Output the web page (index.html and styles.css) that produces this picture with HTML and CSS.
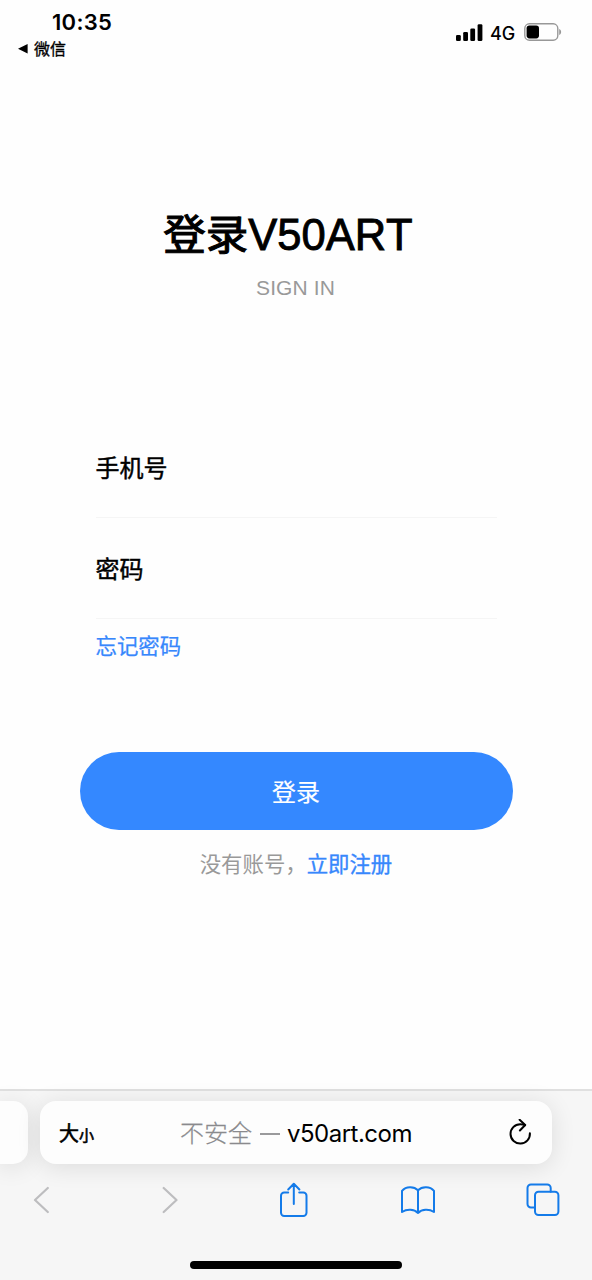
FILE: index.html
```html
<!DOCTYPE html>
<html lang="zh-CN">
<head>
<meta charset="utf-8">
<meta name="viewport" content="width=device-width">
<title>登录V50ART</title>
<link rel="stylesheet" href="styles.css">
</head>
<body>
<div class="screen">
  <header class="status">
    <div class="status-left">
      <div class="clock">10:35</div>
      <div class="back-app">
        <svg width="10" height="11" viewBox="0 0 10 11"><path d="M9.6 1.1V10.5L0 5.8Z"/></svg>
        <span>微信</span>
      </div>
    </div>
    <div class="status-right">
      <svg class="signal" width="27" height="18" viewBox="0 0 27 18">
        <rect x="0" y="11" width="4.8" height="6" rx="1.3"/>
        <rect x="7.2" y="8" width="4.8" height="9" rx="1.3"/>
        <rect x="14.3" y="4.5" width="4.8" height="12.5" rx="1.3"/>
        <rect x="21.6" y="0.2" width="4.8" height="16.8" rx="1.3"/>
      </svg>
      <span class="network">4G</span>
      <svg class="battery" width="38" height="18" viewBox="0 0 38 18">
        <rect x=".8" y=".8" width="33" height="16.4" rx="4.6" fill="none" stroke="#989898" stroke-width="1.4"/>
        <rect x="2.6" y="2.6" width="12.4" height="12.8" rx="2.8"/>
        <path d="M35.2 6C37.8 7 37.8 11 35.2 12Z" fill="#989898"/>
      </svg>
    </div>
  </header>

  <main class="login">
    <h1 class="title">登录<span class="title-latin">V50ART</span></h1>
    <p class="subtitle">SIGN IN</p>
    <form class="form">
      <div class="field">手机号</div>
      <div class="field">密码</div>
      <a class="forgot">忘记密码</a>
    </form>
    <button class="submit" type="button">登录</button>
    <p class="register">没有账号，<a class="register-link">立即注册</a></p>
  </main>

  <footer class="browser">
    <div class="tabs">
      <div class="tab-prev"></div>
      <div class="address">
        <span class="text-size">大<small class="text-small">小</small></span>
        <span class="url"><span class="insecure">不安全 <i class="dash"></i></span><span class="host">v50art.com</span></span>
        <svg class="reload" width="24" height="28" viewBox="0 0 24 28" fill="none" stroke="#000" stroke-width="2" stroke-linecap="round" stroke-linejoin="round">
          <path d="M21.9 14.2A9.7 9.7 0 1 1 12.2 5.2Q14.6 5.2 17 6.2"/>
          <path d="M11.6 .8L17.2 6L11.9 11.5"/>
        </svg>
      </div>
    </div>
    <nav class="toolbar">
      <svg class="chevron" width="16" height="28" viewBox="0 0 16 28"><path d="M14.8 2L2 14L14.8 26"/></svg>
      <svg class="chevron" width="16" height="28" viewBox="0 0 16 28"><path d="M1.7 2L14.5 14L1.7 26"/></svg>
      <svg class="tool" width="30" height="36" viewBox="0 0 30 36"><path d="M9.2 10.5H5.2A3.2 3.2 0 0 0 2 13.7V30.8A3.2 3.2 0 0 0 5.2 34H24.3A3.2 3.2 0 0 0 27.5 30.8V13.7A3.2 3.2 0 0 0 24.3 10.5H20.2M14.8 22V2M9.2 7.5L14.8 1.8L20.4 7.5"/></svg>
      <svg class="tool" width="36" height="36" viewBox="0 0 36 36"><path d="M18 31V8.3M18 31C14 27 7 26.7 2 30V8.8C6 4 14 4 18 8.3C22 4 30 4 34 8.8V30C29 26.7 22 27 18 31"/></svg>
      <svg class="tool" width="34" height="36" viewBox="0 0 34 36"><path d="M9 25.5H5A3.5 3.5 0 0 1 1.5 22V6A3.5 3.5 0 0 1 5 2.5H21.2A3.5 3.5 0 0 1 24.7 6V9.7"/><rect x="9" y="9.7" width="23.4" height="23.4" rx="3.5"/></svg>
    </nav>
    <div class="home"></div>
  </footer>
</div>
</body>
</html>
```
FILE: styles.css
```css
* { box-sizing: border-box; }
body { margin: 0; background: #fefefe; color: #000; font-family: "Liberation Sans", "Noto Sans CJK SC", sans-serif; }
svg { display: block; flex: none; }
.screen { width: 592px; height: 1280px; display: flex; flex-direction: column; overflow: hidden; }
.status { height: 70px; flex: none; display: flex; justify-content: space-between; }
.status-left { padding: 9px 0 0 18px; }
.clock { padding-left: 34px; font: 600 22px/26px Inter, sans-serif; letter-spacing: 0.3px; }
.back-app { display: flex; align-items: center; gap: 6px; margin-top: 2px; font: 400 16px/22px "Noto Sans CJK SC", sans-serif; -webkit-text-stroke: 0.3px #000; }
.status-right { display: flex; align-items: flex-start; padding: 24px 30px 0 0; }
.network { margin-left: 7px; width: 34px; font: 500 18px/19px Inter, sans-serif; }
.battery { margin-top: -1px; }

.login { flex: 1; display: flex; flex-direction: column; align-items: center; }
.title { margin: 134px 16px 0 0; font-size: 42.5px; line-height: 62px; font-weight: 400; font-kerning: none; white-space: nowrap; -webkit-text-stroke: 1.1px #000; }
.title-latin { font-size: 43.5px; -webkit-text-stroke: 0.9px #000; }
.subtitle { margin: 5px 1px 0 0; font-size: 21px; line-height: 32px; letter-spacing: 0.1px; color: #999; }
.form { width: 401px; margin-top: 114px; }
.field { height: 101px; padding-top: 34px; border-bottom: 1px solid #f5f5f5; font-size: 24px; line-height: 36px; -webkit-text-stroke: 0.45px #000; }
.field:first-child { height: 100px; padding-top: 33px; }
.forgot { display: block; margin-top: 12px; font-size: 21.4px; line-height: 32px; color: #3787fc; -webkit-text-stroke: 0.25px #3787fc; }
.submit { width: 433px; height: 78px; margin-top: 89px; padding: 0; border: 0; border-radius: 39px; background: #3488ff; color: #fff; font: 24px/36px "Noto Sans CJK SC", sans-serif; -webkit-text-stroke: 0.2px #fff; }
.register { margin: 19px 0 0; font-size: 21.4px; line-height: 32px; color: #999; }
.register-link { color: #3787fc; -webkit-text-stroke: 0.35px #3787fc; }

.browser { height: 191px; flex: none; border-top: 2px solid #e0e0e0; background: #f6f6f6; display: flex; flex-direction: column; align-items: center; }
.tabs { width: 100%; display: flex; gap: 12px; padding-top: 10px; }
.tab-prev { width: 28px; height: 63px; border-radius: 0 15px 15px 0; background: #fdfdfd; box-shadow: 0 3px 24px rgba(0,0,0,.11); }
.address { width: 512px; height: 63px; border-radius: 16px; background: #fdfdfd; box-shadow: 0 3px 24px rgba(0,0,0,.11); display: grid; grid-template-columns: 121px 1fr 24px; align-items: center; padding: 0 20px 0 19px; }
.text-size { padding-top: 2px; font: 400 20px/30px "Noto Sans CJK SC", sans-serif; -webkit-text-stroke: 0.6px #000; }
.text-small { font-size: 15px; }
.url { display: flex; align-items: center; padding-top: 3px; font: 24px/36px Inter, "Noto Sans CJK SC", sans-serif; }
.insecure { display: flex; align-items: center; gap: 8px; color: #8a8a8d; font-weight: 300; -webkit-text-stroke: 0.25px #8a8a8d; }
.dash { width: 20px; height: 2px; background: #9a9a9c; }
.host { margin-left: 7px; letter-spacing: -0.5px; }
.toolbar { width: 100%; display: grid; grid-template-columns: 128.5px 117px 121.5px 126px 34px; align-items: center; margin-top: 18px; padding-left: 33px; }
.chevron { fill: none; stroke: #bdbdbf; stroke-width: 2.2; stroke-linecap: round; stroke-linejoin: round; }
.tool { fill: none; stroke: #147be9; stroke-width: 2; stroke-linecap: round; stroke-linejoin: round; }
.home { width: 212px; height: 8px; margin-top: 43px; border-radius: 4px; background: #000; }
```
